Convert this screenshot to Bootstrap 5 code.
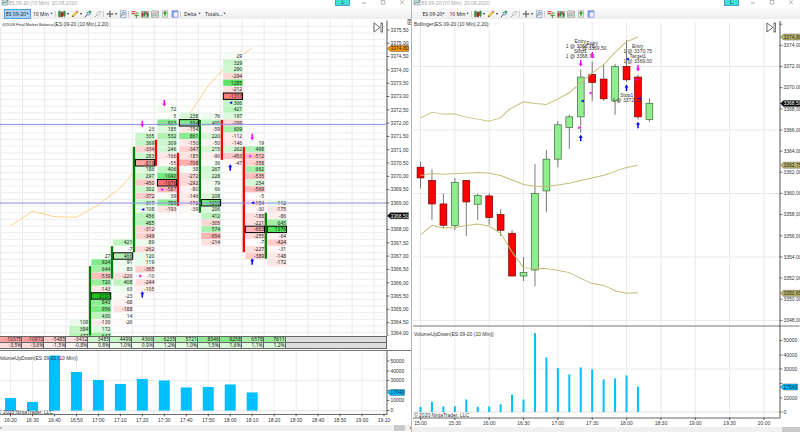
<!DOCTYPE html>
<html lang="en">
<head>
<meta charset="utf-8">
<meta name="viewport" content="width=device-width, initial-scale=1">
<title>ES 09-20 charts</title>
<link href="https://cdn.jsdelivr.net/npm/bootstrap@5.3.0/dist/css/bootstrap.min.css" rel="stylesheet">
<style>
body{font-family:"Liberation Sans",Arial,sans-serif;font-size:5px;line-height:6px;color:#222;background:#fff}
.pane-left{flex:412 1 0;min-width:0}
.pane-right{flex:388 1 0;min-width:0;border-left:1px solid #b5b5b5}
.title-bar{height:8px;color:#999;padding-left:1px;overflow:hidden}
.title-bar h1{font-size:5px;line-height:6px;font-family:"Open Sans",sans-serif;color:#999}
.title-bar button,.tool-bar button{border:0;background:none;padding:0;line-height:0}
.title-bar svg,.tool-bar svg{width:8px;height:8px;display:block}
.title-bar .link-btn{background:#40e0d0;border:1px solid #4a9bd8;border-top:0;width:15px;height:6px;font-size:5px;line-height:5px;color:#234}
.win-btn{width:19px;display:flex;justify-content:center}
.tool-bar{height:11px;background:linear-gradient(#fcfcfc,#ededed);padding-left:4px}
.tool-bar select{appearance:none;border:1px solid transparent;border-radius:0;padding:0 0 0 1px;height:10px;font-family:"Open Sans",sans-serif;font-size:5px;line-height:8px;color:#111;background:url("data:image/svg+xml,%3Csvg xmlns='http://www.w3.org/2000/svg' viewBox='0 0 4 3'%3E%3Cpath d='M.5 .5h3L2 2.5z' fill='%23333'/%3E%3C/svg%3E") no-repeat right 1px center/3px 3px}
.tool-bar .instrument{width:27px}
.tool-bar .instrument.active{background-color:#a9d1f5;border-color:#4f9fe3}
.tool-bar .period{width:24px}
.tool-bar .delta{width:21px}
.tool-bar .totals{width:25px}
.tool-bar button{width:10px;display:flex;align-items:center;justify-content:center}
.tool-bar button.with-caret{width:13px}
.tool-bar .with-caret::after{content:"";border:1px solid transparent;border-top:2px solid #333;border-bottom:0;margin-left:1px}
.divide{width:1px;height:6px;background:#ccc;margin:0 1px 0 0}
.plot{display:block;width:100%;height:auto}
.plot text{font-family:"Liberation Sans",Arial,sans-serif;font-size:5px;fill:#333}
.plot .num{font-family:"Noto Sans","Open Sans",sans-serif;fill:#222}
.sum-wrap{background:#fff}
.sum-wrap table{width:93.93%;table-layout:fixed;border-collapse:collapse;background:#ddd;font-family:"Noto Sans",sans-serif;font-size:5px;line-height:5px;color:#222}
.sum-wrap td{border:1px solid #666;padding:0;height:6px;text-align:right;white-space:nowrap}
.sum-wrap td:first-child{border-left:0}
.sum-wrap col.t{width:5.685%}
.time-scroll{height:6px;background:#f0f0f0;font-size:6px;line-height:5px;color:#333}
.time-scroll .thumb{height:6px;background:#c9c9c9}
.thumb-a{width:11px}.thumb-b{width:18px}
</style>
<script src="https://cdn.jsdelivr.net/npm/bootstrap@5.3.0/dist/js/bootstrap.bundle.min.js"></script>
</head>
<body>
<svg class="d-none" aria-hidden="true">
<symbol id="i-app" viewBox="0 0 8 8"><path d="M1 0h6v5H1z" fill="#dce9f5" stroke="#789" stroke-width=".6"/><path d="M1 4l2-2 2 1 2-3" fill="none" stroke="#3a8a4a" stroke-width=".8"/></symbol>
<symbol id="i-candles" viewBox="0 0 8 8"><path d="M1.5 .5v7M4 1v6.5M6.5 .5v7" stroke="#222" stroke-width=".5"/><path d="M.5 1.5h2v5h-2zM5.3 1.5h2v4h-2z" fill="#2fa52f" stroke="#163" stroke-width=".4"/><path d="M3 2.5h2v4H3z" fill="#d22" stroke="#611" stroke-width=".4"/></symbol>
<symbol id="i-pencil" viewBox="0 0 8 8"><path d="M1 7l.6-2L5.7 1 7 2.2 3 6.4z" fill="#f0cc3c" stroke="#a78a25" stroke-width=".4"/><path d="M5.2 1.5L6 .7 7.3 2l-.8.8z" fill="#b66"/><path d="M1 7l.5-1.5L2.6 6.500z" fill="#543"/></symbol>
<symbol id="i-zoomin" viewBox="0 0 8 8"><path d="M.8 7.200L4 4" stroke="#457" stroke-width="1"/><circle cx="4.500" cy="3.300" r="1.700" fill="#b9dcf0" stroke="#678" stroke-width=".6"/><path d="M4.500 2h3M6 .5v3" stroke="#2a9a46" stroke-width="1"/></symbol>
<symbol id="i-zoomout" viewBox="0 0 8 8"><path d="M.8 7.200L4 4" stroke="#aaa" stroke-width="1"/><circle cx="4.500" cy="3.300" r="1.700" fill="#eee" stroke="#bbb" stroke-width=".6"/><path d="M5 1.500h2.500" stroke="#bbb" stroke-width="1"/></symbol>
<symbol id="i-cross" viewBox="0 0 8 8"><path d="M4 .8v2M4 5.200v2M.8 4h2M5.200 4h2" stroke="#222" stroke-width="1"/><path d="M3 4l1-1 1 1-1 1z" fill="none" stroke="#222" stroke-width=".6"/></symbol>
<symbol id="i-find" viewBox="0 0 8 8"><path d="M1.500 .5h5.500v7H1.500z" fill="#e9eef5" stroke="#8296ac" stroke-width=".6"/><circle cx="4.500" cy="3.500" r="1.400" fill="#cce3f4" stroke="#557" stroke-width=".5"/><path d="M3.500 4.600L1.500 6.600" stroke="#557" stroke-width=".8"/></symbol>
<symbol id="i-trade" viewBox="0 0 8 8"><path d="M.5 1h4v1.300h-4zM.5 3h4v1.300h-4z" fill="#e24a3c"/><path d="M3.500 4.800h4v1.300h-4zM5 2.500h2.500v1.300H5z" fill="#44b04a"/><path d="M5.500 5v2.500M4.500 6.700l1 1 1-1" stroke="#262" stroke-width=".6" fill="none"/></symbol>
<symbol id="i-strategy" viewBox="0 0 8 8"><path d="M.5 1.500h7v5.800h-7z" fill="#b9cbb3" stroke="#565" stroke-width=".5"/><path d="M1.500 3v3.500M5 2v2.500" stroke="#c22" stroke-width="1.300"/><path d="M3.200 2v4M6.500 3v3.500" stroke="#173" stroke-width="1.200"/></symbol>
<symbol id="i-indicator" viewBox="0 0 8 8"><path d="M.5 1h7v6.300h-7z" fill="#dde3de" stroke="#888" stroke-width=".6"/><path d="M1 4.500l2-1.500 2 1 2-2" fill="none" stroke="#c77" stroke-width=".7"/><path d="M1 6l2-1 2 .6L7 4.500" fill="none" stroke="#5a8" stroke-width=".7"/></symbol>
<symbol id="i-doc" viewBox="0 0 8 8"><path d="M1.500 .7h5v6.600h-5z" fill="#f4faf3" stroke="#8a9a8a" stroke-width=".6"/><path d="M4 6.200V2M2.600 3.500L4 2l1.400 1.500" fill="none" stroke="#239a32" stroke-width="1.200"/></symbol>
<symbol id="i-panel" viewBox="0 0 8 8"><path d="M1 .8h6v6.500H1z" fill="#eef2ff" stroke="#6f88d6" stroke-width=".7"/><path d="M1 .8h6v1.500H1zM1 2h1.700v5.300H1z" fill="#7c95e6"/></symbol>
<symbol id="i-min" viewBox="0 0 8 8"><path d="M2 3h4" stroke="#888" stroke-width=".7"/></symbol>
<symbol id="i-max" viewBox="0 0 8 8"><path d="M2.200 .5h3.600v3.700H2.200z" fill="none" stroke="#888" stroke-width=".6"/></symbol>
<symbol id="i-close" viewBox="0 0 8 8"><path d="M2 .2l4 4M6 .2l-4 4" stroke="#888" stroke-width=".6"/></symbol>
</svg>

<main class="d-flex">
<section class="pane-left d-flex flex-column">
  <header class="title-bar d-flex align-items-start">
    <svg><use href="#i-app"/></svg><h1 class="m-0 fw-normal flex-grow-1">ES 09-20 (10 Min)&nbsp; 20.08.2020</h1>
    <button class="link-btn me-1">L</button><button class="win-btn" aria-label="Minimize"><svg><use href="#i-min"/></svg></button><button class="win-btn" aria-label="Maximize"><svg><use href="#i-max"/></svg></button><button class="win-btn" aria-label="Close"><svg><use href="#i-close"/></svg></button>
  </header>
  <nav class="tool-bar d-flex align-items-center" data-extra="1"></nav>
  <svg class="plot" id="footprint" viewBox="0 19 412 317" role="img" aria-label="Order flow"></svg>
  <div class="sum-wrap"><table><colgroup id="sumCols"></colgroup><tbody id="sums"></tbody></table></div>
  <svg class="plot" id="volLeft" viewBox="0 349 412 77" role="img" aria-label="Volume"></svg>
  <footer class="time-scroll d-flex justify-content-between"><span>‹</span><span class="d-flex"><span class="thumb thumb-a me-1"></span>›</span></footer>
</section>
<section class="pane-right d-flex flex-column">
  <header class="title-bar d-flex align-items-start">
    <svg><use href="#i-app"/></svg><h1 class="m-0 fw-normal flex-grow-1">ES 09-20 (10 Min)&nbsp; 20.08.2020</h1>
    <button class="link-btn me-1">L</button><button class="win-btn" aria-label="Minimize"><svg><use href="#i-min"/></svg></button><button class="win-btn" aria-label="Maximize"><svg><use href="#i-max"/></svg></button><button class="win-btn" aria-label="Close"><svg><use href="#i-close"/></svg></button>
  </header>
  <nav class="tool-bar d-flex align-items-center"></nav>
  <svg class="plot" id="candles" viewBox="413 19 387 407" role="img" aria-label="Candles with Bollinger bands"></svg>
  <footer class="time-scroll d-flex justify-content-end"><span class="thumb thumb-b"></span></footer>
</section>
</main>

<script>
// ---- toolbars
document.querySelectorAll('.tool-bar').forEach(function(bar){
  var extra = bar.dataset.extra;
  function btn(icon, label, caret){ return '<button class="'+(caret?'with-caret':'')+'" aria-label="'+label+'"><svg><use href="#i-'+icon+'"/></svg></button>'; }
  var sep = '<span class="divide"></span>';
  bar.innerHTML =
    '<select class="instrument '+(extra?'active':'ms-1')+'" aria-label="Instrument"><option>ES 09-20</option></select>'+
    '<select class="period" aria-label="Period"><option>10 Min</option></select>'+sep+
    btn('candles','Chart style',1)+btn('pencil','Draw',1)+btn('zoomin','Zoom in')+btn('zoomout','Zoom out')+sep+
    btn('cross','Cursor',1)+btn('find','Data box')+sep+
    btn('trade','Chart trader')+btn('strategy','Data series')+btn('indicator','Indicators')+btn('doc','Strategies')+btn('panel','Properties')+
    (extra ? sep+'<select class="delta" aria-label="Delta"><option>Delta</option></select><select class="totals" aria-label="Totals"><option>Totals...</option></select>' : '');
});

// ---- svg helpers
function line(x1,y1,x2,y2,c,w){ return '<path d="M'+x1+' '+y1+'L'+x2+' '+y2+'" stroke="'+c+'" stroke-width="'+(w||1)+'"/>'; }
function rect(x,y,w,h,f,s,sw){ return '<rect x="'+x+'" y="'+y+'" width="'+w+'" height="'+h+'" fill="'+f+'"'+(s?' stroke="'+s+'" stroke-width="'+(sw||1)+'"':'')+'/>'; }
function text(x,y,t,a,cls,style){ return '<text x="'+x+'" y="'+(y+1.8)+'" text-anchor="'+(a||'start')+'"'+(cls?' class="'+cls+'"':'')+(style?' style="'+style+'"':'')+'>'+t+'</text>'; }
function poly(p,c,w){ return '<polyline points="'+p+'" fill="none" stroke="'+c+'" stroke-width="'+(w||1)+'" stroke-linejoin="round"/>'; }
function tag(x,y,w,fill,t,col){ return '<path d="M'+x+' '+y+'l3 -3h'+(w-3)+'v6h-'+(w-3)+'z" fill="'+fill+'" stroke="#333" stroke-width=".4"/>'+text(x+3,y,t,'start','','fill:'+col); }
function arrow(x,y,up){ var c=up?'#00f':'#f0f', d=up?-1:1; return line(x,y-3*d,x,y+1*d,c,1.5)+'<path d="M'+(x-2)+' '+(y+.5*d)+'h4l-2 '+(3*d)+'z" fill="'+c+'"/>'; }
function tri(x,y,left){ var d=left?-1:1; return '<path d="M'+(x-1.5*d)+' '+(y-1.5)+'v3l'+(3*d)+' -1.500z" fill="'+(left?'#00f':'#f0f')+'"/>'; }
function skip(x){ return '<path d="M'+x+' 23v9l6 -4.500z" fill="#fff" stroke="#444" stroke-width=".8"/>'+rect(x+7,23,1.6,9,'#fff','#444',.7); }
function price(v){ return v.toFixed(2).replace('.',','); }

// ---- order flow ladder: [first row, values, boxed row, bar colour, bar top, bar bottom]
var GRID='#e9e9e9', STEP=6.667, Y0=56.3, cols=[
 [40,[109,384,477]],
 [30,[27,924,644,-539,720,-143,2107,843,956,430,-130,172,647],36,'g',266.5,336],
 [28,[421,-7,466,91,83,-220,408,63,-23,-68,-188,14,-26],30,'g',246.5,279],
 [11,[23,335,369,-334,283,-819,186,297,-450,302,-372,317,108,456,485,-312,-349,89,-262,120,119,-365,-10,-244,-105],16,'g',147,252.5],
 [8,[72,5,923,185,532,309,246,-166,-55,406,1040,-1676,-587,39,789,-193],19,'r',140,166],
 [9,[238,894,-154,861,-150,-347,-185,-708,38,-272,-292,-80,-146,-172,-39],10,'r',153,206],
 [9,[76,400,-59,220,-50,215,-90,36,267,228,79,66,208,1010,206,412,-305,574,-654,-214],22,'g',120,213],
 [0,[29,329,290,-294,1285,-212,-1313,366,421,197,-299,609,-112,-146,262,-453,-47],6,'r',120,160],
 [13,[19,498,-512,-358,662,-535,254,-569,-5,-154,-30,-188,-221,-663,-255,-7,-227,-389],26,'r',147,252.5],
 [22,[112,-175,-86,645,1376,-64,-424,-31,-148,-172],26,'g',213,259]];
function shade(v){
  var a=Math.min(1,Math.pow(Math.abs(v)/1500,.8)), t=v>0?[70,226,80]:[255,110,110];
  if(v>2000) t=[30,196,30];
  return 'rgb('+t.map(function(c){return Math.round(255+(c-255)*a);}).join()+')';
}
var s='', i, y;
for(i=0;i<18;i++) s+=line(.5+22*i,20,.5+22*i,336,GRID);
for(i=-5;i<42;i++){ y=Y0+STEP*(i+.5); s+=line(0,y,387,y,GRID,.8); }
s+=poly('10.5,226 32.5,211.5 54.5,217 76.500,217.5 98.500,205 120.5,188 142.5,163 164.5,129 186.5,119 208.5,86 230.5,62 252,48.500','#ffd08a');
var boxes='';
cols.forEach(function(c,n){
  var x=67+22*n;
  c[1].forEach(function(v,r){
    var k=c[0]+r, cy=Y0+STEP*k;
    s+=rect(x+2.5,cy-3.3,19.500,6.3,shade(v));
    s+=text(x+21.5,cy,v,'end','num');
    if(k===c[2]) boxes+=rect(x+2.6,cy-3.2,19.3,6.400,'none','#000',1);
  });
  if(c[3]) s+=rect(x,c[4],2.3,c[5]-c[4],c[3]==='g'?'#008000':'#f00');
});
s+=line(0,124.5,387,124.5,'#8c8cf0')+line(0,203.3,387,203.3,'#8c8cf0')+boxes;
[[142.5,124],[164.5,103],[252.5,137]].forEach(function(p){s+=arrow(p[0],p[1],false);});
[[142.5,295],[230.5,168],[252.5,262]].forEach(function(p){s+=arrow(p[0],p[1],true);});
s+=tri(143,Y0+STEP*23,1)+tri(141,Y0+STEP*33)+tri(163,Y0+STEP*20)+tri(231,Y0+STEP*7,1)+tri(251,Y0+STEP*15)+tri(253,Y0+STEP*22,1);
s+=rect(388,19,24,317,'#fff')+line(387.5,20.500,387.5,336,'#555');
for(i=0;i<24;i++){ y=30+13.32*i; s+=line(387,y,390,y,'#555',.8)+(i===14?'':text(391,Math.min(y,334),price(3375.5-.5*i))); }
s+=tag(388,48.500,21,'#ff9900','3374,80','#222')+tag(388,216,21,'#000','3368,50','#fff');
s+=rect(0,20.5,53,6.5,'#fff')+text(2,24,'@2018 Final Market Balance','start','','fill:#222;font-size:4px')+text(54,24,'(ES 09-20 (10 Min),2,20)');
s+=skip(374.5)+rect(408.5,19.5,5,5,'#fff','#666',.7)+text(409.3,22,'F');
document.getElementById('footprint').innerHTML=s;

// ---- totals table
var tot=[-10375,-10972,-5485,-3432,3485,4499,4366,6235,5721,8346,9258,6578,7611],
    pct=['-3,5%','-3,6%','-1,5%','-0,8%','0,8%','1,0%','0,9%','1,2%','1,0%','1,5%','1,6%','1,1%','1,2%'];
function tint(v,k){ var a=Math.min(1,Math.abs(v)/11000)*k, t=v>0?[110,225,110]:[255,155,155]; return 'rgb('+t.map(function(c){return Math.round(255+(c-255)*a);}).join()+')'; }
document.getElementById('sumCols').innerHTML=tot.map(function(){return '<col class="t">';}).join('')+'<col>';
document.getElementById('sums').innerHTML='<tr>'+tot.map(function(v){return '<td style="background:'+tint(v,1)+'">'+v+'</td>';}).join('')+'<td></td></tr><tr>'+
  pct.map(function(p,i){return '<td style="background:'+tint(tot[i],.35)+'">'+p+'</td>';}).join('')+'<td></td></tr>';

// ---- left volume
s=line(0,350.5,412,350.5,'#777')+line(0,380.5,387,380.5,GRID)+line(0,411,387,411,'#ddd');
for(i=0;i<18;i++) s+=line(10.5+22*i,351,10.5+22*i,414,GRID,.8);
[398,402,355.5,372,380,384,379,380.5,387.5,387,384.5,392.5].forEach(function(t,n){ s+=rect(5+22*n,t,11,410.7-t,'#00bfff'); });
s+=line(0,414.5,388,414.5,'#666')+line(387.5,351,387.5,414,'#555');
['16:20','16:30','16:40','16:50','17:00','17:10','17:20','17:30','17:40','17:50','18:00','18:10','18:20','18:30','18:40','18:50','19:00','19:10'].forEach(function(t,n){
  s+=line(10.5+22*n,414,10.5+22*n,416.500,'#555')+text(10.5+22*n,420,t,'middle'); });
[[361,'50000'],[371,'40000'],[380.5,'30000'],[390.5,''],[400.5,'10000'],[410.5,'0']].forEach(function(p){ s+=line(387,p[0],390,p[0],'#555',.8)+text(391,p[0],p[1]); });
s+=tag(388,392.5,17,'#00bfff','17640','#124')+text(-2,358,'VolumeUpDown(ES 09-20 (10 Min))')+text(-2,412,'© 2020 NinjaTrader, LLC');
document.getElementById('volLeft').innerHTML=s;

// ---- candles: [up, wick top, body top, body bottom, wick bottom, volume top]
var cs=[[0,161.3,167,177.700,188.3,406.3],[0,169.3,180.3,203.7,219.7,401.3],[0,193.3,203.7,225,227.7,406],[1,177.7,182.3,225.3,230,405.7],
[0,180.3,180.3,201.7,235.7,399],[1,193.3,195.3,204,219.7,406.3],[0,193.3,195.7,217.3,224.7,406],[0,209,214.3,230,235.7,403.7],
[0,230,233,275.7,275.7,394],[1,256.7,272.3,275.7,280.7,399],[1,164,193.3,269.7,286,332.7],[1,150,159,190.7,212,357],
[1,121,124.7,159,167,367.7],[1,114.3,116.7,127.3,148.7,374],[1,69.3,77,116.7,132.7,367],[0,61.3,74.3,82.3,101,369],
[0,64,79,98.7,100.7,379],[1,64,66.3,100.7,114.7,378],[0,40,66.3,79.700,82,375],[0,74.7,77,116.7,119.3,386.3],[1,98.3,103.3,119.3,121.7,0]];
s='';
for(i=0;i<11;i++) s+=line(421.5+34.3*i,22,421.5+34.3*i,417,GRID);
for(i=0;i<5;i++) s+=line(414,66.5+63.4*i,780,66.5+63.4*i,GRID);
s+=line(414,368.5,780,368.5,GRID)+line(414,411.5,780,411.5,'#ddd');
cs.forEach(function(c,n){
  var x=421.5+11.43*n;
  s+=line(x,c[1],x,c[4],'#555',.8)+rect(x-3.4,c[2],6.800,c[3]-c[2],c[0]?'#90ee90':'#f00',c[0]?'#3b6b3b':'#700',.7);
  if(c[5]) s+=rect(x-1,c[5],2,411.5-c[5],'#00bfff');
});
var K='#c6bd78';
s+=poly('421.500,118 433,112 444,114 456,114 467,117 479,119 490,121 501,118 510,109.3 524.3,101.7 535.7,103.3 547.3,104.3 558.3,99 570,92.7 581.7,82.3 592.3,73.3 604,65 615.7,52.3 627.3,41.7 638.7,37',K);
s+=poly('421.7,175.3 432.7,173.3 444.3,174 460,173.3 480,172.3 490.3,173 501.7,175.3 524.3,184.3 535.7,186 547.3,186 558.3,184.7 570,183 592.3,177.7 605,175 616.7,170.7 627.3,167.3 638.7,165',K);
s+=poly('421.7,234.7 432.7,225 444.3,227.7 455.7,227.3 467.3,225.3 478.7,223.7 490.3,226 501.7,233.3 513,251.7 524.3,267.3 535.7,268.3 547.3,268.3 558.3,270 570,272.3 581.7,278 592.3,283 605,285.3 616.7,290.7 627.3,293 638.7,292.3',K);
[[581,41,'Entry'],[581,46,'1 @ 3368,75'],[581,51,'Stop1'],[581,56,'1 @ 3368,75'],[593,43,'Entry'],[593,48,'1 @ 3369,50'],
 [638.5,46,'Entry'],[638.5,51,'1 @ 3370,75'],[638.5,56,'Target1'],[638.5,61,'1 @ 3369,00'],[627.5,95,'Stop1'],[627.5,100,'1 @ 3372,75']
].forEach(function(t){ s+=text(t[0],t[1],t[2],'middle'); });
[[581.5,63],[593,55],[638.7,68]].forEach(function(p){s+=arrow(p[0],p[1],false);});
[[581.5,138],[627.2,88],[638.7,125]].forEach(function(p){s+=arrow(p[0],p[1],true);});
s+=tri(583,101,1)+tri(628,59,1)+tri(640,98.5,1)+tri(592,93)+tri(580.5,127.5)+tri(637.5,79.5);
s+=line(414,325.5,800,325.5,'#777')+line(414,417.5,781,417.5,'#666')+line(780.5,21,780.5,417,'#555');
for(i=0;i<15;i++){ y=24.2+21.130*i; s+=line(780,y,783,y,'#555',.8)+(i&&i!==0?text(784,y,price(3376-2*i)):''); }
s+=tag(781,37,20,'#bdb76b','3374,80','#222')+tag(781,103.5,20,'#000','3368,50','#fff')+tag(781,165,20,'#bdb76b','3362,75','#222')+tag(781,293,20,'#bdb76b','3350,65','#222');
[[340,'50000'],[354.5,'40000'],[368.5,'30000'],[383,''],[397.5,'10000'],[411.5,'0']].forEach(function(p){ s+=line(780,p[0],783,p[0],'#555',.8)+text(784,p[0],p[1]); });
s+=tag(781,386.5,17,'#00bfff','17640','#124');
['15:00','15:30','16:00','16:30','17:00','17:30','18:00','18:30','19:00','19:30','20:00'].forEach(function(t,n){
  var x=421.5+34.3*n; s+=line(x,417,x,419.5,'#555')+text(x,422.7,t,'middle'); });
s+=skip(767.5)+text(415,24,'Bollinger(ES 09-20 (10 Min),2,20)')+text(415,333.500,'VolumeUpDown(ES 09-20 (10 Min))')+text(415,414.5,'© 2020 NinjaTrader, LLC');
document.getElementById('candles').innerHTML=s;
</script>
</body>
</html>
